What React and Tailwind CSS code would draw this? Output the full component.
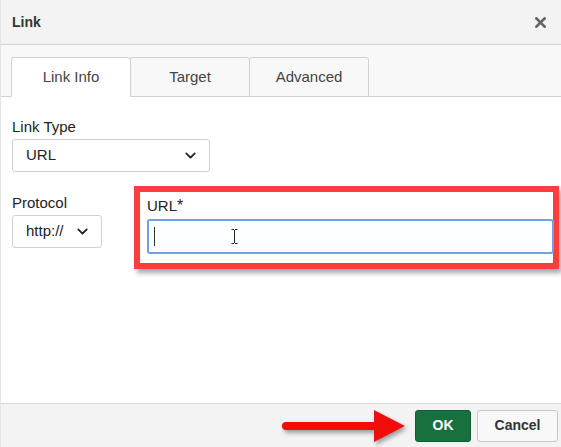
import { X, ChevronDown } from 'lucide-react';

function Select({ value, className }) {
  return (
    <div className={`flex items-center justify-between border border-[#d1d1d1] rounded-[3px] bg-white pl-[13px] pr-[10px] h-[33px] text-[15px] text-[#222] ${className}`}>
      <span>{value}</span>
      <ChevronDown className="w-[17px] h-[17px] text-[#222]" strokeWidth={2.5} />
    </div>
  );
}

export default function App() {
  const tabs = ['Link Info', 'Target', 'Advanced'];

  return (
    <div className="w-[561px] h-[447px] flex flex-col bg-white border-l border-[#e4e4e4] font-['Liberation_Sans',Arial,sans-serif] text-[#333] overflow-hidden">
      {/* Header */}
      <div className="h-[45px] flex items-center justify-between pl-[11px] pr-[12px] bg-[#f3f3f3] border-b border-[#d1d1d1]">
        <span className="text-[14px] font-bold text-[#333]">Link</span>
        <X className="w-[17px] h-[17px] text-[#666]" strokeWidth={3.5} />
      </div>

      {/* Tabs */}
      <div className="h-[52px] bg-[#f8f8f8] flex items-end pl-[10px] border-b border-[#d1d1d1]">
        {tabs.map((tab, i) => (
          <div
            key={tab}
            className={`w-[120px] h-[40px] -mb-px flex items-center justify-center text-[15px] text-[#444] border border-[#d1d1d1] rounded-t-[3px] ${i === 0 ? 'bg-white border-b-white' : 'bg-[#f8f8f8]'} ${i > 0 ? '-ml-px' : ''}`}
          >
            {tab}
          </div>
        ))}
      </div>

      {/* Body */}
      <div className="flex-1 bg-white pt-[21px] pl-[11px] pr-[2px]">
        <div className="text-[15px] text-[#222] leading-[18px]">Link Type</div>
        <Select value="URL" className="w-[198px] mt-[3px]" />

        <div className="flex mt-[14px]">
          <div className="pt-[8px] w-[90px] shrink-0">
            <div className="text-[15px] text-[#222] leading-[18px]">Protocol</div>
            <Select value="http://" className="w-[90px] mt-[3px] pl-[11px] pr-[8px]" />
          </div>

          {/* Highlighted URL field */}
          <div className="ml-[32px] w-[425px] h-[83px] border-[6px] border-[#fc3d3d] shadow-[3px_4px_5px_rgba(0,0,0,0.35)] pl-[7px] pt-[5px]">
            <div className="text-[15px] text-[#222] leading-[18px]">URL<span className="text-[16px]">*</span></div>
            <div className="relative mt-[4px] w-[407px] h-[35px] border-2 border-[#6ea1e0] rounded-[3px] bg-[#fcfeff] flex items-center pl-[5px]">
              <span className="w-px h-[19px] bg-[#333]" />
              {/* text cursor */}
              <svg className="absolute left-[82px] top-[8px]" width="7" height="15" viewBox="0 0 7 15">
                <path d="M0.5 0.5h2.5M4 0.5h2.5M3.5 1v13M0.5 14.5h2.5M4 14.5h2.5" stroke="#222" strokeWidth="1" fill="none" />
              </svg>
            </div>
          </div>
        </div>
      </div>

      {/* Footer */}
      <div className="h-[44px] bg-[#f3f3f3] border-t border-[#d9d9d9] flex items-center justify-end pr-[3px] gap-[6px]">
        {/* Annotation arrow */}
        <svg width="126" height="34" viewBox="0 0 126 34" className="mr-[2px] drop-shadow-[2px_3px_2px_rgba(0,0,0,0.35)]">
          <path d="M5 13h88V1l31 16-31 16V21H5a4 4 0 0 1 0-8z" fill="#f20d0d" />
        </svg>
        <button className="w-[56px] h-[32px] rounded-[3px] bg-[#17713f] text-white font-bold text-[14px] border border-[#0f5e33]">
          OK
        </button>
        <button className="w-[81px] h-[32px] rounded-[3px] bg-[#f8f8f8] text-[#333] font-bold text-[14px] border border-[#c7c7c7]">
          Cancel
        </button>
      </div>
    </div>
  );
}
